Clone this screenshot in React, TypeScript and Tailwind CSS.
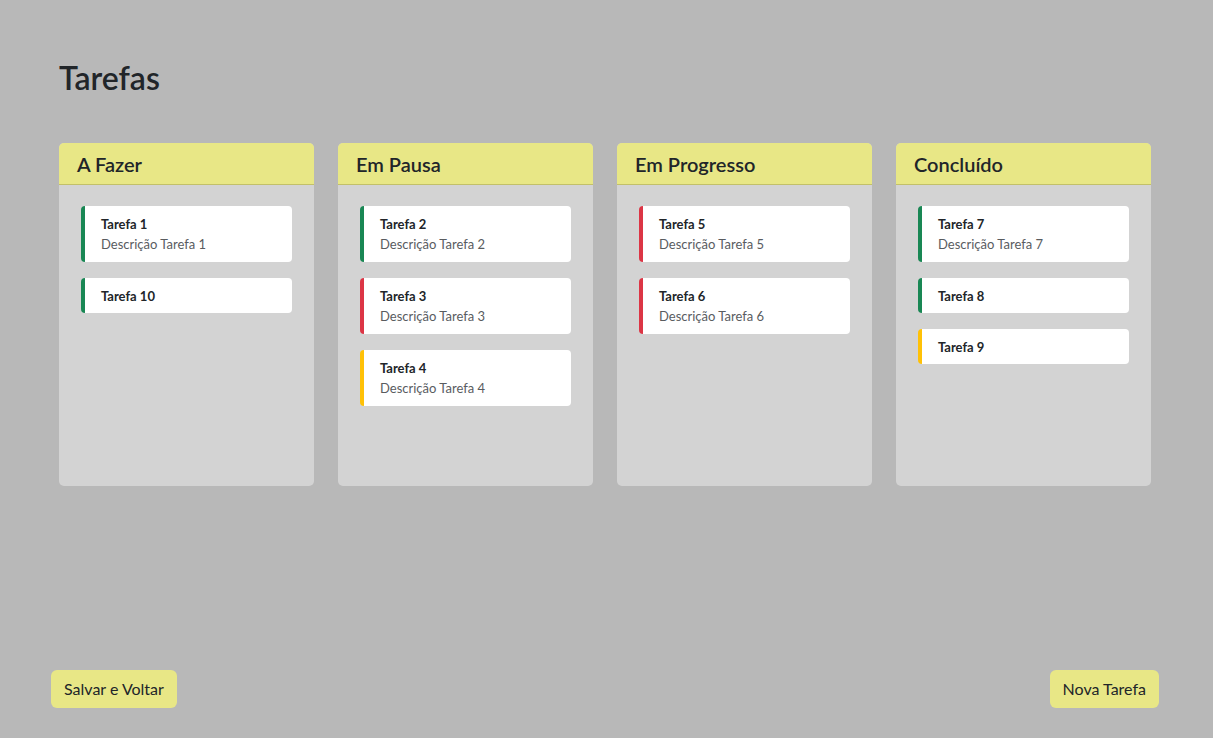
import React from 'react';

type Prioridade = 'baixa' | 'media' | 'alta';

interface Tarefa {
  id: number;
  titulo: string;
  descricao?: string;
  prioridade: Prioridade;
}

interface Coluna {
  nome: string;
  tarefas: Tarefa[];
}

const BORDAS: Record<Prioridade, string> = {
  baixa: 'border-l-[#198754]',
  media: 'border-l-[#ffc107]',
  alta: 'border-l-[#dc3545]',
};

const COLUNAS: Coluna[] = [
  {
    nome: 'A Fazer',
    tarefas: [
      { id: 1, titulo: 'Tarefa 1', descricao: 'Descrição Tarefa 1', prioridade: 'baixa' },
      { id: 10, titulo: 'Tarefa 10', prioridade: 'baixa' },
    ],
  },
  {
    nome: 'Em Pausa',
    tarefas: [
      { id: 2, titulo: 'Tarefa 2', descricao: 'Descrição Tarefa 2', prioridade: 'baixa' },
      { id: 3, titulo: 'Tarefa 3', descricao: 'Descrição Tarefa 3', prioridade: 'alta' },
      { id: 4, titulo: 'Tarefa 4', descricao: 'Descrição Tarefa 4', prioridade: 'media' },
    ],
  },
  {
    nome: 'Em Progresso',
    tarefas: [
      { id: 5, titulo: 'Tarefa 5', descricao: 'Descrição Tarefa 5', prioridade: 'alta' },
      { id: 6, titulo: 'Tarefa 6', descricao: 'Descrição Tarefa 6', prioridade: 'alta' },
    ],
  },
  {
    nome: 'Concluído',
    tarefas: [
      { id: 7, titulo: 'Tarefa 7', descricao: 'Descrição Tarefa 7', prioridade: 'baixa' },
      { id: 8, titulo: 'Tarefa 8', prioridade: 'baixa' },
      { id: 9, titulo: 'Tarefa 9', prioridade: 'media' },
    ],
  },
];

const CartaoTarefa: React.FC<{ tarefa: Tarefa }> = ({ tarefa }) => (
  <div className={`bg-white rounded-[4px] border-l-4 ${BORDAS[tarefa.prioridade]} pl-4 pr-3 pt-[9px] pb-[7px]`}>
    <div className="text-[13px] font-bold leading-[19px] text-[#212529]">{tarefa.titulo}</div>
    {tarefa.descricao && (
      <div className="text-[13px] leading-[21px] text-[#595c5f]">{tarefa.descricao}</div>
    )}
  </div>
);

const App: React.FC = () => {
  return (
    <div
      className="min-h-screen bg-[#b8b8b8] flex flex-col text-[#212529]"
      style={{ fontFamily: '"Lato", "Noto Sans", sans-serif' }}
    >
      <div className="flex-grow px-[59px] pt-[58px]">
        <h1 className="text-[32px] font-semibold leading-[40px] mb-[45px]">Tarefas</h1>

        <div className="flex gap-6">
          {COLUNAS.map((coluna) => (
            <div key={coluna.nome} className="w-[255px] h-[343px] bg-[#d3d3d3] rounded-[5px] overflow-hidden">
              <div className="bg-[#e8e786] border-b border-[#c2c069] h-[42px] px-[18px] flex items-center">
                <h5 className="text-[20px] font-semibold leading-6">{coluna.nome}</h5>
              </div>
              <div className="px-[22px] pt-[21px] flex flex-col gap-4">
                {coluna.tarefas.map((t) => (
                  <CartaoTarefa key={t.id} tarefa={t} />
                ))}
              </div>
            </div>
          ))}
        </div>
      </div>

      <div className="flex justify-between pl-[51px] pr-[54px] pb-[30px]">
        <button className="bg-[#e8e786] rounded-md px-[13px] h-[38px] text-[16px] text-[#212529]">Salvar e Voltar</button>
        <button className="bg-[#e8e786] rounded-md px-[13px] h-[38px] text-[16px] text-[#212529]">Nova Tarefa</button>
      </div>
    </div>
  );
};

export default App;
